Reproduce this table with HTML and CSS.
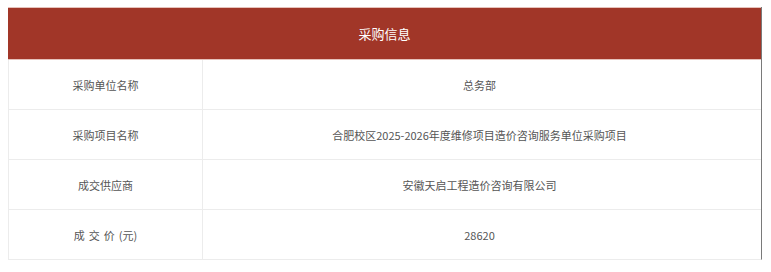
FILE: index.html
```html
<!DOCTYPE html>
<html lang="zh">
<head>
<meta charset="utf-8">
<link rel="stylesheet" href="styles.css">
</head>
<body>
<div class="info">
  <div class="head">采购信息</div>
  <div class="row">
    <div class="label">采购单位名称</div>
    <div class="value">总务部</div>
  </div>
  <div class="row">
    <div class="label">采购项目名称</div>
    <div class="value">合肥校区2025-2026年度维修项目造价咨询服务单位采购项目</div>
  </div>
  <div class="row">
    <div class="label">成交供应商</div>
    <div class="value">安徽天启工程造价咨询有限公司</div>
  </div>
  <div class="row last">
    <div class="label"><span class="spaced">成交价</span>(元)</div>
    <div class="value">28620</div>
  </div>
</div>
</body>
</html>
```

FILE: styles.css
```css
html, body {
  margin: 0;
  padding: 0;
  background: #ffffff;
}
body {
  padding: 7px 0 0 8px;
  font-family: "Noto Sans CJK SC", "Noto Sans", sans-serif;
}
.info {
  width: 752px;
  border-left: 1px solid #ececec;
  border-right: 1px solid #7a7a7a;
  border-bottom: 1px solid #ececec;
  box-sizing: content-box;
}
.head {
  height: 51px;
  border-top: 1px solid #e6c2bb;
  border-bottom: 1px solid #e6c2bb;
  background: #a13628;
  color: #ffffff;
  font-size: 13px;
  display: flex;
  align-items: center;
  justify-content: center;
  margin-left: -1px;
}
.row {
  display: flex;
  height: 49px;
  border-bottom: 1px solid #ececec;
  color: #555555;
  font-size: 11px;
}
.row.last {
  border-bottom: none;
}
.label {
  width: 193px;
  border-right: 1px solid #ececec;
  display: flex;
  align-items: center;
  justify-content: center;
}
.value {
  flex: 1;
  display: flex;
  align-items: center;
  justify-content: center;
  padding-right: 5px;
}
.spaced {
  letter-spacing: 4px;
}
```
